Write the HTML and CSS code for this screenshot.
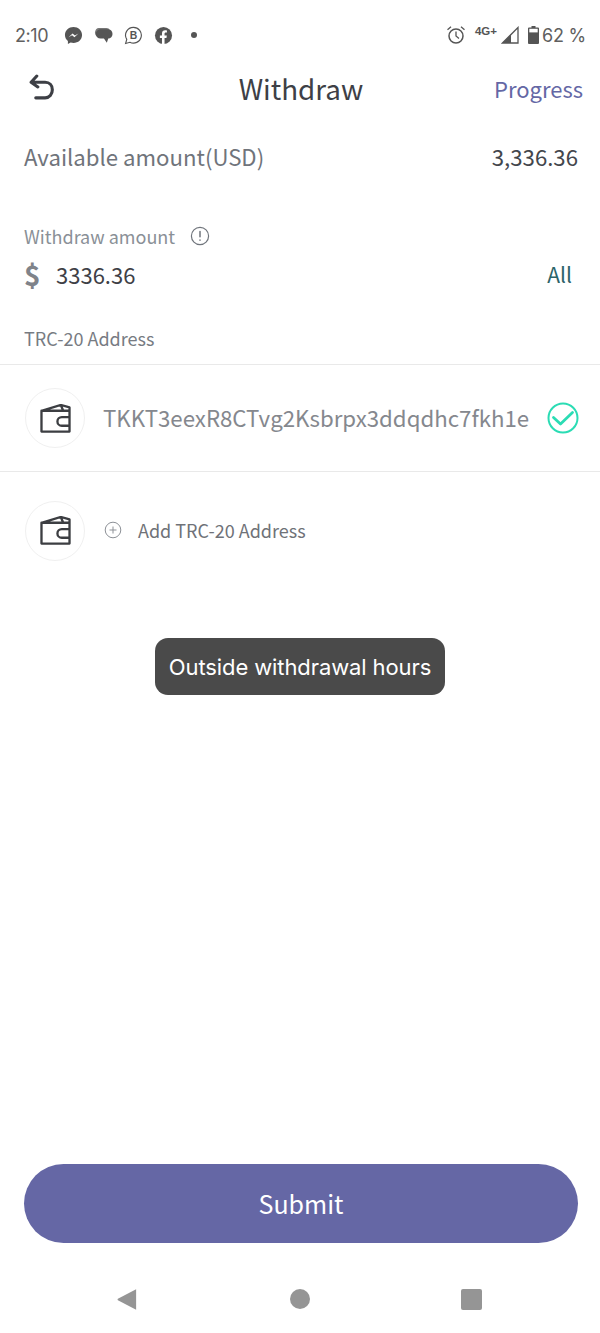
FILE: index.html
```html
<!DOCTYPE html>
<html lang="en">
<head>
<meta charset="utf-8">
<title>Withdraw</title>
<link rel="stylesheet" href="styles.css">
</head>
<body>
<div class="page">
  <div class="statusbar">
    <span class="time">2:10</span>
    <div class="notifs">
      <svg class="ic" viewBox="0 0 20 20"><path fill="#555" d="M10 1C5 1 1 4.700 1 9.400c0 2.600 1.200 4.800 3.100 6.300V19l2.900-1.600c.9.300 2 .4 3 .4 5 0 9-3.700 9-8.400S15 1 10 1z"/><path fill="#fff" d="M4.800 11.800 9 7.900l2.500 2 3.700-2.100-4.200 4-2.500-2z"/></svg>
      <svg class="ic" viewBox="0 0 20 20"><path fill="#777" d="M5 2h8c2 0 3 .8 3.300 1.500L6 12C3 12 1 10 1 7.200 1 4 3 2 5 2z"/><path fill="#555" d="M7.500 3.500h7c3 0 5 2 5 4.800 0 2.800-2 4.700-4.500 4.900l-1.500 4.300-3-4.300h-3.500c-3 0-5-2-5-4.800s2.500-4.900 5.500-4.900z"/></svg>
      <svg class="ic" viewBox="0 0 20 20"><path fill="none" stroke="#555" stroke-width="1.200" d="M10 1.400a8.300 8.300 0 1 1-3.800 15.700L1.700 18.400l1.200-4.300A8.300 8.300 0 0 1 10 1.400z"/><text class="ic-b" x="10" y="13.800" text-anchor="middle">B</text></svg>
      <svg class="ic" viewBox="0 0 20 20"><circle cx="10" cy="10" r="9" fill="#555"/><path fill="#fff" d="M8.400 19v-6.400H6.200V10h2.200V8c0-2.200 1.300-3.400 3.300-3.400.9 0 1.900.2 1.900.2v2.100h-1.100c-1 0-1.400.7-1.400 1.300V10h2.400l-.4 2.600h-2V19z"/></svg>
      <span class="dot"></span>
    </div>
    <div class="sys">
      <svg class="ic-alarm" viewBox="0 0 20 20"><circle cx="10" cy="11" r="7" fill="none" stroke="#555" stroke-width="1.500"/><path fill="none" stroke="#555" stroke-width="1.300" d="M10 6.500V11l3 2.400M1.500 4.800 5 1.800M18.500 4.800 15 1.800"/></svg>
      <span class="net">4G+</span>
      <svg class="ic-signal" viewBox="0 0 18 18"><path fill="none" stroke="#555" stroke-width="1.300" d="M1.500 17 17 1.500V17z"/><path fill="#555" d="M1.500 17 10 8.500V17z"/></svg>
      <svg class="ic-batt" viewBox="0 0 11 18"><path fill="#555" d="M3.500 0h4v1.500H10a1 1 0 0 1 1 1V17a1 1 0 0 1-1 1H1a1 1 0 0 1-1-1V2.500a1 1 0 0 1 1-1h2.500z"/><rect x="1.300" y="2.800" width="8.400" height="3.600" fill="#fff"/></svg>
      <span class="pct">62 %</span>
    </div>
  </div>

  <header class="nav">
    <svg class="back" viewBox="0 0 28 28"><path fill="none" stroke="#3d3f45" stroke-width="3" stroke-linecap="round" stroke-linejoin="round" d="M8.500 2 3 8l6.500 4.500M4 8h12.500c4.200 0 7 2.900 7 7.200s-2.800 7.800-7 7.800H7.500"/></svg>
    <h1 class="title">Withdraw</h1>
    <span class="progress">Progress</span>
  </header>

  <div class="available">
    <span class="avail-label">Available amount(USD)</span>
    <span class="avail-val">3,336.36</span>
  </div>

  <div class="label-row">
    <span class="label">Withdraw amount</span>
    <svg class="info" viewBox="0 0 20 20"><circle cx="10" cy="10" r="8.600" fill="none" stroke="#70757c" stroke-width="1.200"/><path fill="none" stroke="#70757c" stroke-width="1.500" stroke-linecap="round" d="M10 5.600v5.200M10 14v.2"/></svg>
  </div>
  <div class="amount-row">
    <span class="dollar">$</span>
    <span class="amount">3336.36</span>
    <span class="all">All</span>
  </div>

  <div class="trc">TRC-20 Address</div>

  <div class="addr-row first">
    <div class="wallet">
      <svg viewBox="0 0 32 30"><path fill="none" stroke="#3c3e42" stroke-width="2.400" stroke-linejoin="round" d="M1.500 7v21.500h29V7zM1.500 7 21.500 1 24 7M21.500 1l9 2.500V7M30.500 13.500h-8a4.500 4.500 0 0 0 0 9h8"/></svg>
    </div>
    <span class="addr">TKKT3eexR8CTvg2Ksbrpx3ddqdhc7fkh1e</span>
    <svg class="check" viewBox="0 0 32 32"><circle cx="16" cy="16" r="14.500" fill="none" stroke="#2bdcb4" stroke-width="2"/><path fill="none" stroke="#2bdcb4" stroke-width="2.800" stroke-linecap="round" stroke-linejoin="round" d="M6.500 15.500 13.500 22 25.500 10.500"/></svg>
  </div>

  <div class="addr-row second">
    <div class="wallet">
      <svg viewBox="0 0 32 30"><path fill="none" stroke="#3c3e42" stroke-width="2.400" stroke-linejoin="round" d="M1.500 7v21.500h29V7zM1.500 7 21.500 1 24 7M21.500 1l9 2.500V7M30.500 13.500h-8a4.500 4.500 0 0 0 0 9h8"/></svg>
    </div>
    <svg class="plus" viewBox="0 0 18 18"><circle cx="9" cy="9" r="7.800" fill="none" stroke="#8d9197" stroke-width="1"/><path fill="none" stroke="#8d9197" stroke-width="1" d="M9 5.500v7M5.500 9h7"/></svg>
    <span class="add">Add TRC-20 Address</span>
  </div>

  <div class="toast">Outside withdrawal hours</div>

  <div class="footer">
    <button class="submit" type="button">Submit</button>
    <div class="softkeys">
      <svg class="key" viewBox="0 0 20 24"><path fill="#959595" d="M.500 12.700a1 1 0 0 1 0-1.500L19.500 1.300v21.500z"/></svg>
      <span class="key-home"></span>
      <span class="key-recent"></span>
    </div>
  </div>
</div>
</body>
</html>
```
FILE: styles.css
```css
* { box-sizing: border-box; }
html, body { margin: 0; padding: 0; background: #fff; }
body { font-family: "Noto Sans CJK SC", "Noto Sans", sans-serif; }
.page {
  position: relative;
  width: 600px;
  height: 1333px;
  display: flex;
  flex-direction: column;
  overflow: hidden;
  background: #fff;
}
.statusbar {
  height: 70px;
  flex: none;
  display: flex;
  align-items: center;
  padding: 0 14px 0 15px;
  color: #606060;
}
.time { font: 400 18px Inter, sans-serif; letter-spacing: -0.4px; width: 49px; }
.notifs { display: flex; align-items: center; gap: 11px; }
.ic { width: 19px; height: 19px; display: block; }
.ic-b { font: 700 11px "Liberation Sans", sans-serif; fill: #555; }
.dot { width: 6px; height: 6px; border-radius: 50%; background: #555; margin-left: 7px; }
.sys { margin-left: auto; display: flex; align-items: center; }
.ic-alarm { width: 20px; height: 20px; display: block; margin-right: 9px; }
.net { font: 700 11.500px "Liberation Sans", sans-serif; color: #555; width: 26px; margin-bottom: 9px; }
.ic-signal { width: 18px; height: 18px; display: block; margin-right: 9px; }
.ic-batt { width: 11px; height: 18px; display: block; margin-right: 3px; }
.pct { font: 400 18px Inter, sans-serif; letter-spacing: -0.2px; }
.nav {
  height: 40px;
  flex: none;
  display: flex;
  align-items: center;
  justify-content: center;
  position: relative;
}
.back { position: absolute; left: 28px; top: 4px; width: 29px; height: 29px; }
.title { margin: 0 0 4px 2px; font-size: 27.800px; font-weight: 400; color: #3e4046; line-height: 36px; }
.progress { position: absolute; right: 17px; top: -2px; font-size: 22px; line-height: 40px; color: #6467a5; }
.available {
  flex: none;
  height: 40px;
  margin-top: 26px;
  padding: 0 22px 0 24px;
  display: flex;
  align-items: center;
  justify-content: space-between;
}
.avail-label { font-size: 22.200px; line-height: 40px; color: #70747b; }
.avail-val { font-size: 22.200px; line-height: 40px; color: #43464c; }
.label-row {
  flex: none;
  height: 30px;
  margin-top: 45px;
  padding-left: 24px;
  display: flex;
  align-items: center;
  gap: 15px;
}
.label { font-size: 18px; line-height: 30px; color: #8a9097; }
.info { width: 20px; height: 20px; display: block; }
.amount-row {
  flex: none;
  height: 40px;
  margin-top: 3px;
  padding: 0 28px 0 24px;
  display: flex;
  align-items: center;
}
.dollar { width: 32px; font-size: 28px; font-weight: 700; color: #7f838a; line-height: 40px; }
.amount { font-size: 22px; line-height: 40px; color: #3e4046; }
.all { margin-left: auto; font-size: 21px; line-height: 40px; color: #2c6469; }
.trc {
  flex: none;
  height: 31px;
  margin-top: 29px;
  padding-left: 24px;
  font-size: 18px;
  line-height: 30px;
  color: #777b82;
}
.addr-row {
  flex: none;
  display: flex;
  align-items: center;
  padding-left: 25px;
  border-top: 1px solid #e9e9e9;
}
.addr-row.first { height: 107px; margin-top: 10px; }
.addr-row.second { height: 118px; padding-bottom: 0; }
.wallet {
  width: 60px;
  height: 60px;
  flex: none;
  border: 1px solid #f0f0f0;
  border-radius: 50%;
  display: flex;
  align-items: center;
  justify-content: center;
}
.wallet svg { width: 31px; height: 29px; display: block; }
.addr { margin-left: 18px; margin-bottom: 2px; font-size: 22.250px; line-height: 38px; color: #85888e; white-space: nowrap; }
.check { width: 32px; height: 32px; margin-left: auto; margin-right: 21px; display: block; flex: none; }
.plus { width: 18px; height: 18px; margin-left: 19px; margin-bottom: 2px; display: block; }
.add { margin-left: 16px; margin-bottom: 2px; font-size: 18px; line-height: 28px; color: #6f7278; }
.toast {
  position: absolute;
  left: 155px;
  top: 638px;
  width: 290px;
  height: 57px;
  border-radius: 13px;
  background: #4a4a4a;
  color: #fff;
  font: 400 22px/59px Inter, sans-serif;
  letter-spacing: -0.1px;
  text-align: center;
}
.footer { margin-top: auto; flex: none; }
.submit {
  display: block;
  width: 554px;
  height: 79px;
  margin: 0 0 0 24px;
  padding: 0 0 2px;
  border: 0;
  border-radius: 40px;
  background: #6567a5;
  color: #fff;
  font: 400 25px "Noto Sans CJK SC", "Noto Sans", sans-serif;
}
.softkeys {
  height: 90px;
  display: flex;
  align-items: center;
  justify-content: space-between;
  padding: 22px 118px 0 117px;
}
.key { width: 20px; height: 23px; display: block; }
.key-home { width: 20px; height: 20px; margin-left: 2px; border-radius: 50%; background: #959595; }
.key-recent { width: 21px; height: 21px; border-radius: 2px; background: #959595; }
```
